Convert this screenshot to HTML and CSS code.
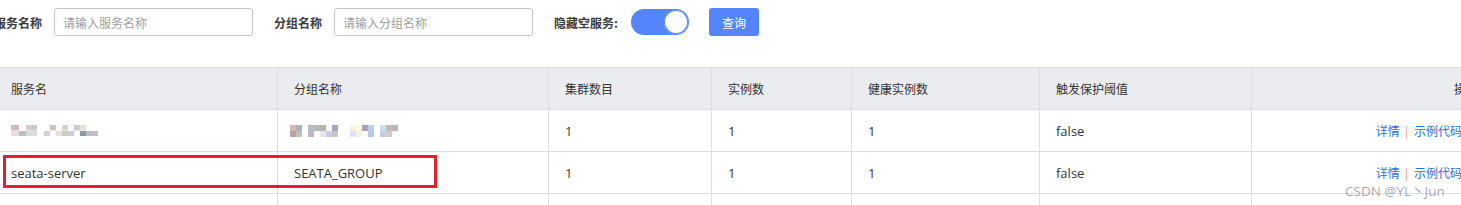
FILE: index.html
```html
<html>
  <head>
    <title>服务列表</title>
    <meta name="viewport" content="width=device-width, initial-scale=1">
    <link rel="stylesheet" href="styles.css">
  </head>
  <body>
    <div class="page">
      <form class="filter">
        <label class="label">服务名称</label>
        <input class="input" type="text" placeholder="请输入服务名称">
        <label class="label">分组名称</label>
        <input class="input" type="text" placeholder="请输入分组名称">
        <label class="label wide">隐藏空服务:</label>
        <span class="switch on"><span class="knob"></span></span>
        <button class="btn" type="button">查询</button>
      </form>

      <table class="list">
        <colgroup>
          <col class="c1"><col class="c2"><col class="c3"><col class="c4">
          <col class="c5"><col class="c6"><col class="c7">
        </colgroup>
        <thead>
          <tr>
            <th>服务名</th>
            <th>分组名称</th>
            <th>集群数目</th>
            <th>实例数</th>
            <th>健康实例数</th>
            <th>触发保护阈值</th>
            <th class="ops">操作</th>
          </tr>
        </thead>
        <tbody>
          <tr>
            <td><span class="blur blur-name"></span></td>
            <td><span class="blur blur-group"></span></td>
            <td class="val">1</td>
            <td class="val">1</td>
            <td class="val">1</td>
            <td class="val">false</td>
            <td class="ops"><a class="link">详情</a><span class="sep">|</span><a class="link">示例代码</a></td>
          </tr>
          <tr>
            <td class="val">seata-server</td>
            <td class="val">SEATA_GROUP</td>
            <td class="val">1</td>
            <td class="val">1</td>
            <td class="val">1</td>
            <td class="val">false</td>
            <td class="ops"><a class="link">详情</a><span class="sep">|</span><a class="link">示例代码</a></td>
          </tr>
          <tr>
            <td></td><td></td><td></td><td></td><td></td><td></td><td></td>
          </tr>
        </tbody>
      </table>

      <div class="mark"></div>
      <div class="watermark">CSDN @YL丶Jun</div>
    </div>
  </body>
</html>
```

FILE: styles.css
```css
* { box-sizing: border-box; }
html, body {
  overflow: hidden;
}
body {
  margin: 0;
  background: #fff;
  color: #333;
  font: 12px "Open Sans", "Noto Sans CJK SC", sans-serif;
}

.page {
  position: relative;
  width: 1500px;
  margin-left: -6px;
}

/* filter bar */
.filter {
  display: flex;
  align-items: center;
  margin: 0;
  padding-top: 8px;
  height: 36px;
}

.label {
  width: 48px;
  margin-right: 12px;
  font-family: "Noto Sans CJK SC", sans-serif;
  font-size: 12px;
  font-weight: bold;
  color: #3a3a3a;
  white-space: nowrap;
}

.label.wide {
  width: 64px;
  margin-right: 13px;
}

.input {
  width: 199px;
  height: 28px;
  margin-right: 21px;
  padding: 0 8px;
  border: 1px solid #c4c6cf;
  border-radius: 3px;
  font-family: "Noto Sans CJK SC", sans-serif;
  font-size: 12px;
  color: #333;
  outline: none;
}

.input::placeholder {
  font-size: 12px;
  color: #a0a0a0;
}

.switch {
  display: flex;
  justify-content: flex-end;
  align-items: center;
  width: 58px;
  height: 26px;
  margin-right: 20px;
  padding: 1px;
  border-radius: 13px;
  background: #5584ff;
}

.knob {
  width: 24px;
  height: 24px;
  border-radius: 50%;
  background: #fff;
  box-shadow: 0 0 0 1px #5584ff inset;
}

.btn {
  width: 50px;
  height: 28px;
  padding: 0;
  border: 0;
  border-radius: 3px;
  background: #5584ff;
  color: #fff;
  font-family: "Noto Sans CJK SC", sans-serif;
  font-size: 12px;
}

/* table */
.list {
  width: 1500px;
  margin-top: 31px;
  table-layout: fixed;
  border-collapse: collapse;
  font-family: "Open Sans", "Noto Sans CJK SC", sans-serif;
  font-size: 12px;
  color: #333;
}

.c1 { width: 283px; }
.c2 { width: 271px; }
.c3 { width: 163px; }
.c4 { width: 140px; }
.c5 { width: 188px; }
.c6 { width: 212px; }
.c7 { width: 243px; }

.list th, .list td {
  height: 42px;
  padding: 0 16px;
  border: 1px solid #dcdee3;
  text-align: left;
  vertical-align: middle;
  white-space: nowrap;
  overflow: hidden;
}

.list th {
  background: #ebecf0;
  font-weight: normal;
  font-family: "Noto Sans CJK SC", sans-serif;
  color: #333;
}

.list th.ops {
  text-align: right;
}

.list td.ops {
  text-align: right;
  padding-right: 32px;
  font-family: "Noto Sans CJK SC", sans-serif;
}

.list td.val {
  font-size: 13px;
}

.link {
  color: #2b6fd8;
  cursor: pointer;
}

.sep {
  margin: 0 6px 0 5px;
  color: #e39b35;
}

/* pixelated (hidden) values */
.blur {
  display: inline-block;
  vertical-align: middle;
  background-repeat: no-repeat;
  background-size: 100% 50%;
  background-position: left top, left bottom;
}

.blur-name {
  width: 87px;
  height: 11px;
  background-image:
    linear-gradient(90deg, #cdbcb8 0 8px, transparent 8px 15px, #d6cdc8 15px 20px, #c5cad6 20px 26px,
      transparent 26px 39px, #c8c8c0 39px 45px, transparent 45px 51px, #d9d2c6 51px 57px,
      transparent 57px 63px, #c7cbd3 63px 69px, #e2e2d8 69px 75px, transparent 75px),
    linear-gradient(90deg, #e6dcd8 0 8px, #b8bec4 8px 15px, #d8dce0 15px 20px, #dcdcd0 20px 26px,
      transparent 26px 33px, #d6d0dc 33px 39px, transparent 39px 45px, #e8e0d6 45px 51px,
      #c8ccb8 51px 57px, #d0cce0 57px 63px, transparent 63px 69px, #8e96a6 69px 75px,
      #b8c0c0 75px 81px, #cbbcc8 81px 87px);
}

.blur-group {
  width: 108px;
  height: 12px;
  margin-left: -4px;
  background-image:
    linear-gradient(90deg, #d8b8b4 0 6px, #a8b4bc 6px 12px, transparent 12px 18px, #b8bcc4 18px 24px,
      #b4b8bc 24px 30px, #b8b4ac 30px 36px, transparent 36px 42px, #a8a4c4 42px 48px,
      transparent 48px 60px, #fcf0e4 60px 66px, #fcf8ec 66px 72px, #a8a0b4 72px 78px,
      #b8d4ec 78px 84px, transparent 84px 90px, #c8e0f4 90px 96px, #c8b8bc 96px 102px,
      #b8b8b4 102px 108px),
    linear-gradient(90deg, #b8a0a8 0 6px, #c4c0b8 6px 12px, transparent 12px 18px, #c0b4c8 18px 24px,
      transparent 24px 30px, #e4e8ec 30px 36px, #c8ccdc 36px 42px, #c8c8c0 42px 48px,
      transparent 48px 60px, #d8e4f4 60px 66px, #f8f0e4 66px 72px, transparent 72px 78px,
      #b8c8e4 78px 84px, transparent 84px 90px, #c8ccd4 90px 96px, #d4c8d8 96px 102px,
      transparent 102px);
}

/* annotation over the second row */
.mark {
  position: absolute;
  left: 9px;
  top: 155px;
  width: 434px;
  height: 33px;
  border: 3px solid #e5202a;
  pointer-events: none;
}

.watermark {
  position: absolute;
  left: 1351px;
  top: 180px;
  font-family: "Open Sans", "Noto Sans CJK SC", sans-serif;
  font-size: 13.5px;
  color: rgba(110, 110, 110, 0.6);
  white-space: nowrap;
}
```
